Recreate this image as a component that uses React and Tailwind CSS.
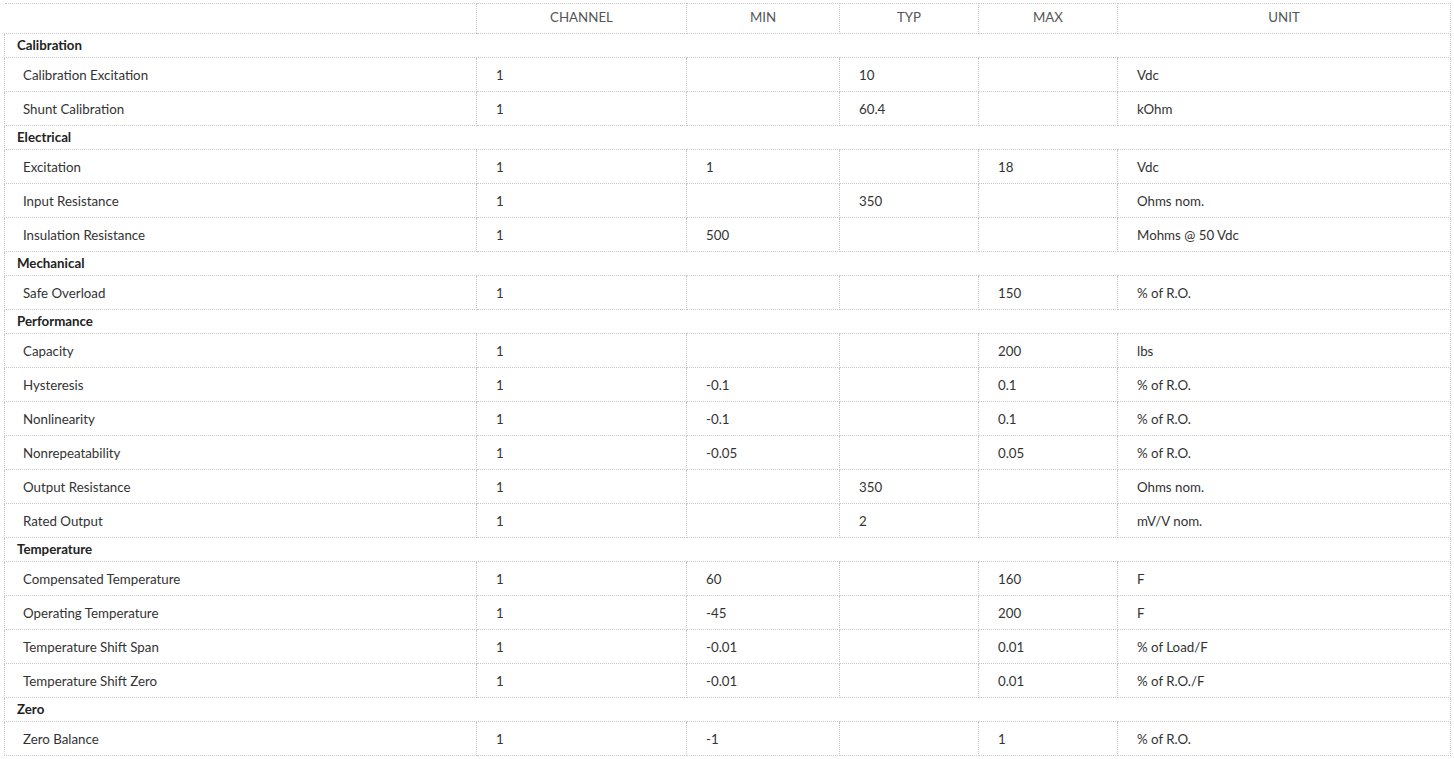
import { Fragment } from "react";

const sections = [
  {
    name: "Calibration",
    rows: [
      ["Calibration Excitation", "1", "", "10", "", "Vdc"],
      ["Shunt Calibration", "1", "", "60.4", "", "kOhm"],
    ],
  },
  {
    name: "Electrical",
    rows: [
      ["Excitation", "1", "1", "", "18", "Vdc"],
      ["Input Resistance", "1", "", "350", "", "Ohms nom."],
      ["Insulation Resistance", "1", "500", "", "", "Mohms @ 50 Vdc"],
    ],
  },
  {
    name: "Mechanical",
    rows: [["Safe Overload", "1", "", "", "150", "% of R.O."]],
  },
  {
    name: "Performance",
    rows: [
      ["Capacity", "1", "", "", "200", "lbs"],
      ["Hysteresis", "1", "-0.1", "", "0.1", "% of R.O."],
      ["Nonlinearity", "1", "-0.1", "", "0.1", "% of R.O."],
      ["Nonrepeatability", "1", "-0.05", "", "0.05", "% of R.O."],
      ["Output Resistance", "1", "", "350", "", "Ohms nom."],
      ["Rated Output", "1", "", "2", "", "mV/V nom."],
    ],
  },
  {
    name: "Temperature",
    rows: [
      ["Compensated Temperature", "1", "60", "", "160", "F"],
      ["Operating Temperature", "1", "-45", "", "200", "F"],
      ["Temperature Shift Span", "1", "-0.01", "", "0.01", "% of Load/F"],
      ["Temperature Shift Zero", "1", "-0.01", "", "0.01", "% of R.O./F"],
    ],
  },
  {
    name: "Zero",
    rows: [["Zero Balance", "1", "-1", "", "1", "% of R.O."]],
  },
];

const headers = ["CHANNEL", "MIN", "TYP", "MAX", "UNIT"];
const cell = "border border-dotted border-[#c8c8c8]";

export default function App() {
  return (
    <div className="bg-white min-h-screen pt-[3px] pl-[4px] font-['Lato',sans-serif] text-[13.3px] text-[#333]">
      <table className="table-fixed border-collapse w-[1446px]">
        <colgroup>
          <col className="w-[472px]" />
          <col className="w-[210px]" />
          <col className="w-[153px]" />
          <col className="w-[139px]" />
          <col className="w-[139px]" />
          <col className="w-[333px]" />
        </colgroup>
        <thead>
          <tr className="h-[30px]">
            <th className="border-t border-b border-dotted border-[#c8c8c8]"></th>
            {headers.map((h) => (
              <th key={h} className={`${cell} font-normal text-center text-[#555] pb-[1px]`}>
                {h}
              </th>
            ))}
          </tr>
        </thead>
        <tbody>
          {sections.map((s) => (
            <Fragment key={s.name}>
              <tr className="h-[24px]">
                <td colSpan={6} className={`${cell} pl-[12px] pt-[1px] font-bold text-[#222]`}>
                  {s.name}
                </td>
              </tr>
              {s.rows.map((r) => (
                <tr key={r[0]} className="h-[34px]">
                  {r.map((v, i) => (
                    <td key={i} className={`${cell} pt-[2px] ${i === 0 ? "pl-[18px]" : "pl-[19px]"}`}>
                      {v}
                    </td>
                  ))}
                </tr>
              ))}
            </Fragment>
          ))}
        </tbody>
      </table>
    </div>
  );
}
